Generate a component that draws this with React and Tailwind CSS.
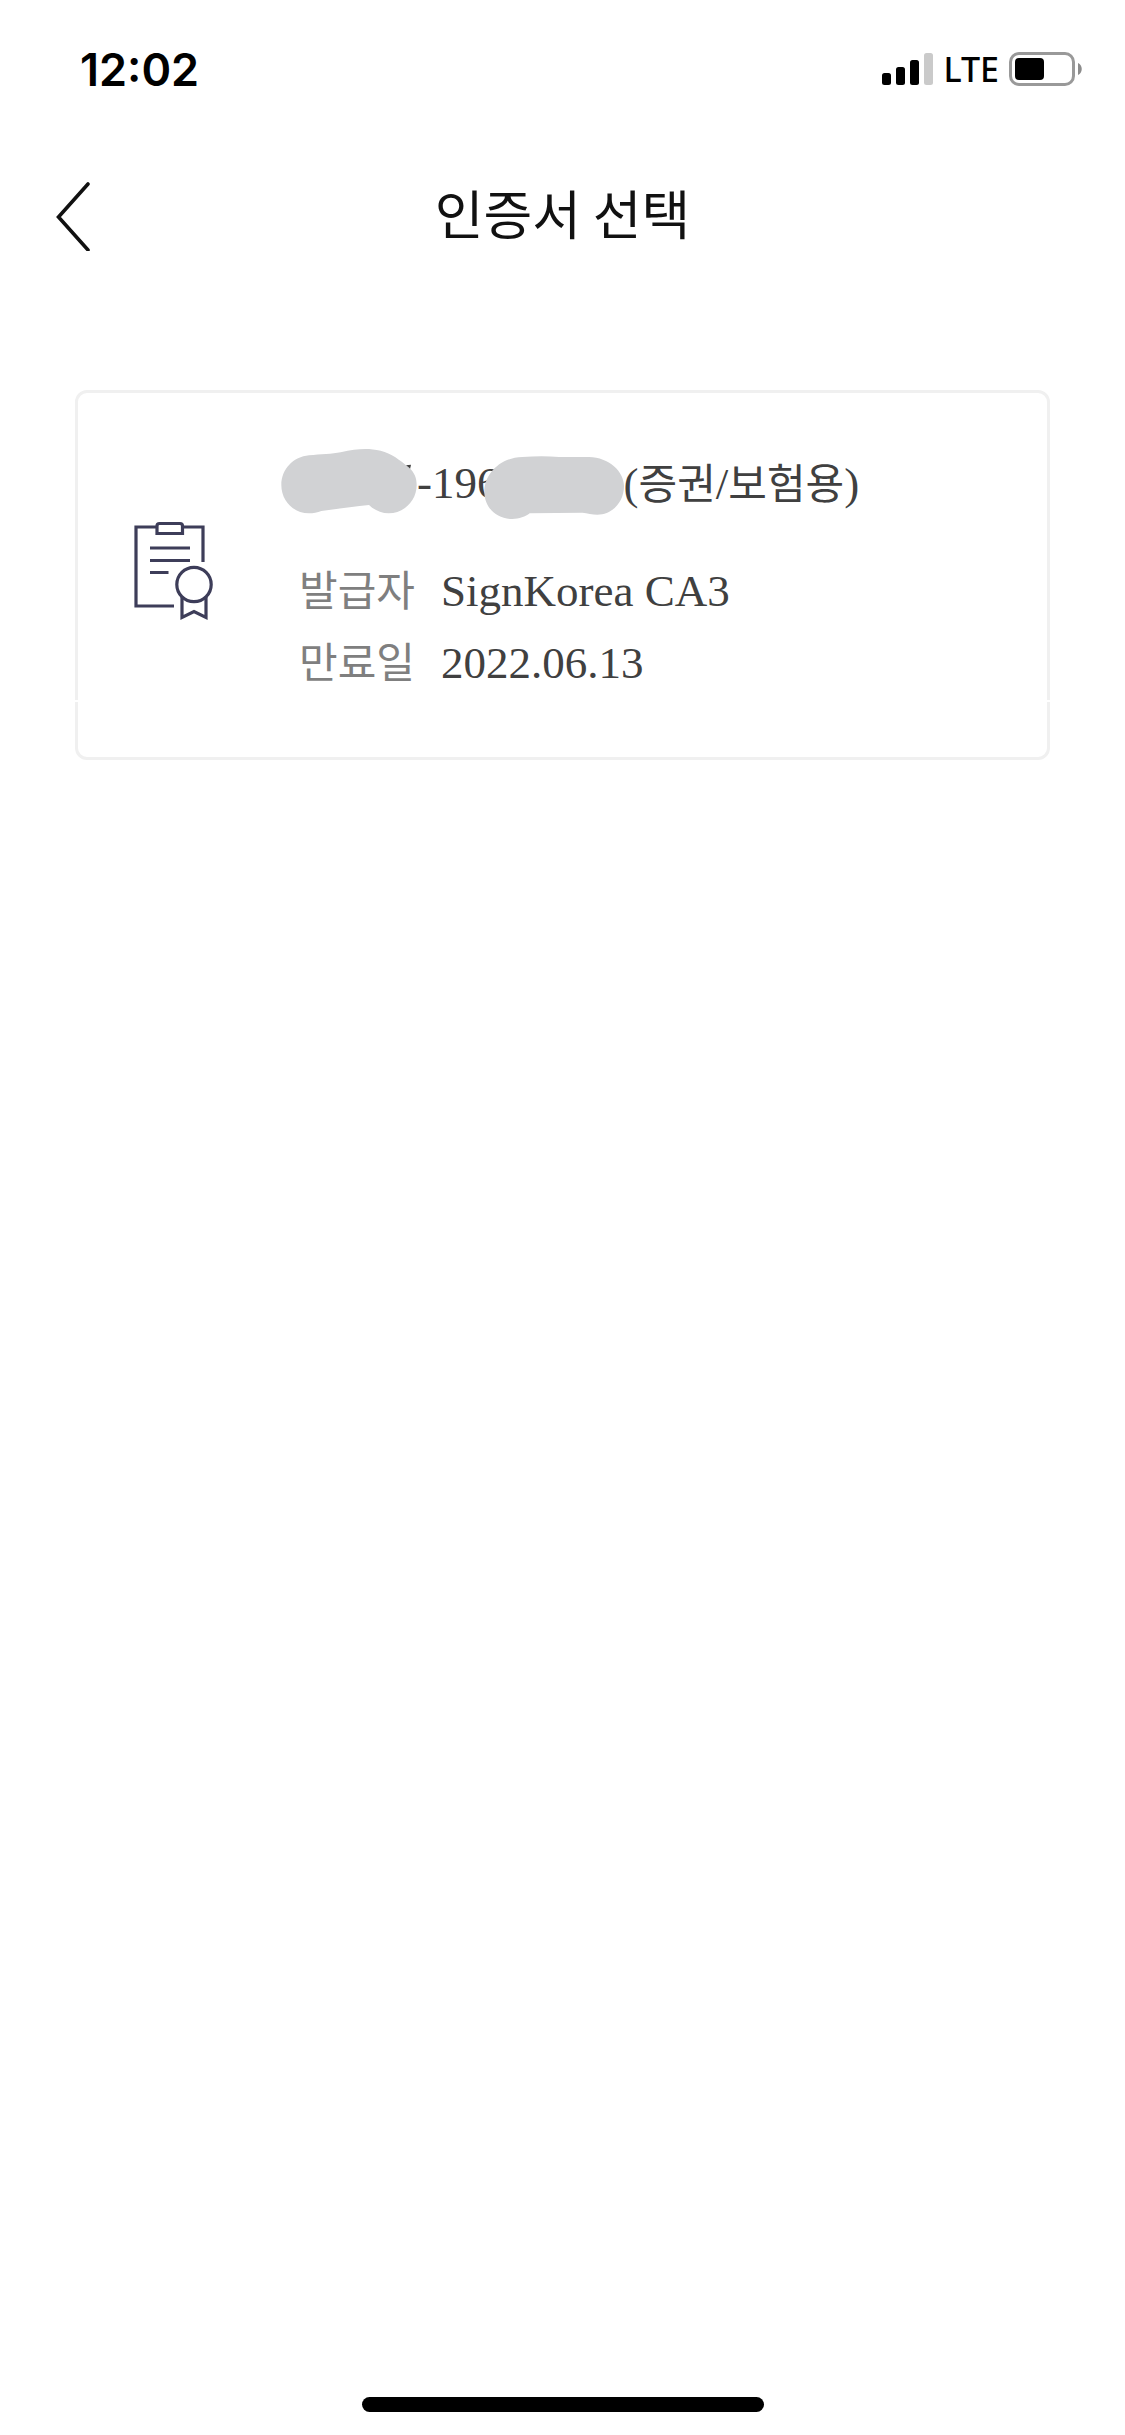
const SIGNAL_BARS = [
  { x: 0, height: 12, color: '#000000' },
  { x: 14, height: 18, color: '#000000' },
  { x: 28, height: 25, color: '#000000' },
  { x: 42, height: 32, color: '#cacaca' },
]

const DETAILS = [
  { label: '발급자', value: 'SignKorea CA3' },
  { label: '만료일', value: '2022.06.13' },
]

function SignalIcon() {
  return (
    <svg width="51" height="32" viewBox="0 0 51 32" aria-hidden="true">
      {SIGNAL_BARS.map((bar) => (
        <rect key={bar.x} x={bar.x} y={32 - bar.height} width="9" height={bar.height} rx="2.5" fill={bar.color} />
      ))}
    </svg>
  )
}

function BatteryIcon() {
  return (
    <svg width="74" height="34" viewBox="0 0 74 34" aria-hidden="true">
      <rect x="1.5" y="1.5" width="63" height="31" rx="8.5" fill="none" stroke="#999999" strokeWidth="3" />
      <rect x="6" y="6" width="29" height="22" rx="4" />
      <path d="M69 11C74 13 74 21 69 23Z" fill="#8c8c8c" />
    </svg>
  )
}

function StatusBar() {
  return (
    <div className="flex h-[138px] items-center justify-between pl-20 pr-[42px]">
      <span className="font-['Inter',sans-serif] text-[45px] font-semibold leading-none">12:02</span>
      <div className="flex items-center gap-[10px]">
        <SignalIcon />
        <span className="font-['Noto_Sans',sans-serif] text-[34px] font-medium leading-none">LTE</span>
        <BatteryIcon />
      </div>
    </div>
  )
}

function Header() {
  return (
    <header className="grid h-[156px] grid-cols-[1fr_auto_1fr] items-center px-14">
      <button type="button" aria-label="뒤로" className="justify-self-start">
        <svg width="34" height="70" viewBox="0 0 34 70" fill="none" stroke="#111111" strokeWidth="3.6" strokeLinecap="round" aria-hidden="true">
          <path d="M32 3L2.500 36L32 69" />
        </svg>
      </button>
      <h1 className="pb-2 font-['Noto_Sans_CJK_KR',sans-serif] text-[53px] leading-none text-[#111111]">인증서 선택</h1>
    </header>
  )
}

function CertificateIcon() {
  return (
    <svg width="80" height="100" viewBox="0 0 80 100" fill="none" stroke="#3d3d59" strokeWidth="3.2" className="shrink-0" aria-hidden="true">
      <path d="M23 6H2V85H40" />
      <path d="M49 6H69V41" />
      <path d="M23 12.500V5Q23 2.500 25.500 2.500H46Q48.500 2.500 48.500 5V12.500Z" />
      <path d="M16 27H56M16 39.500H56M16 51.500H34.500" />
      <circle cx="60" cy="63.500" r="17.200" />
      <path d="M48 76V96.500L60 90.500L72 96.500V76" />
    </svg>
  )
}

/** Grey scribbles that hide the holder's name and number */
function NameMask() {
  return (
    <svg width="136" height="74" viewBox="61 48 408 222" className="shrink-0" aria-hidden="true">
      <path d="M436 106L451 104L447 122Z" fill="#404040" />
      <path
        d="M62 165C62 118 98 80 145 76C180 73 215 72 240 67C290 56 320 54 360 62C392 70 418 90 444 112C462 128 468 145 468 165C468 212 430 250 384 250C360 250 338 238 325 225C280 228 230 238 182 243C170 248 158 250 145 250C98 250 62 212 62 165Z"
        fill="#d1d2d4"
      />
    </svg>
  )
}

function NumberMask() {
  return (
    <svg width="140" height="74" viewBox="675 48 420 222" className="-ml-4 shrink-0" aria-hidden="true">
      <path
        d="M676 185C676 135 720 83 790 81Q850 77 900 81H990C1050 82 1095 125 1095 168C1095 216 1060 254 1015 254C1000 254 985 250 970 248L812 250C800 260 780 267 760 267C712 267 676 232 676 185Z"
        fill="#d1d2d4"
      />
    </svg>
  )
}

function Hangul({ children }) {
  return <span className="font-['Noto_Sans_CJK_KR',sans-serif] text-[42px]">{children}</span>
}

function CertificateCard() {
  return (
    <section className="relative mx-[75px] mt-24 flex items-center rounded-[12px] border-[3px] border-[#f0f0f0] px-14 pb-[61px] pt-[52px]">
      {/* break in the frame where its two halves meet */}
      <div className="absolute -inset-x-[3px] bottom-[55px] h-[2px] bg-white" />
      <CertificateIcon />
      <div className="ml-[67px] font-['Liberation_Serif',serif] text-[45px] leading-[72px] text-[#404040]">
        <div className="flex items-center whitespace-nowrap">
          <NameMask />
          <span>-196</span>
          <NumberMask />
          <span>
            (<Hangul>증권</Hangul>/<Hangul>보험용</Hangul>)
          </span>
        </div>
        <dl className="ml-[18px] mt-8">
          {DETAILS.map((item) => (
            <div key={item.label} className="flex h-[72px] items-baseline gap-[26px]">
              <dt className="text-[#7f7f7f]">
                <Hangul>{item.label}</Hangul>
              </dt>
              <dd>{item.value}</dd>
            </div>
          ))}
        </dl>
      </div>
    </section>
  )
}

export default function App() {
  return (
    <main className="flex min-h-screen flex-col bg-white text-black">
      <StatusBar />
      <Header />
      <CertificateCard />
      <div className="mb-[23px] mt-auto h-[15px] w-[402px] self-center rounded-full bg-black" />
    </main>
  )
}
